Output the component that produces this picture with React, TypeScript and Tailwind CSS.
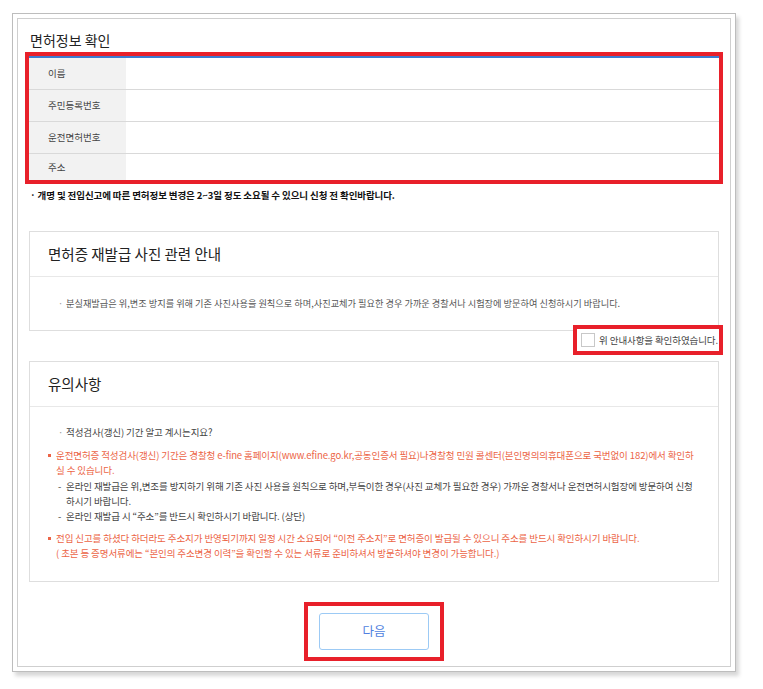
import React from 'react';

const FONT = "font-['Noto_Sans_CJK_KR','Liberation_Sans',sans-serif]";

const ROWS = ['이름', '주민등록번호', '운전면허번호', '주소'];

function RedBullet() {
  return (
    <span className="flex h-[15px] w-[8px] shrink-0 items-center">
      <span className="h-[3px] w-[3px] bg-[#ec6446]" />
    </span>
  );
}

export default function App() {
  return (
    <div className={`min-h-screen bg-white pt-[13px] pl-[12px] ${FONT}`}>
      {/* outer frame */}
      <div className="w-[724px] border border-[#bdbdbd] p-1 shadow-[3px_4px_4px_rgba(0,0,0,0.16)]">
        <div className="border border-[#cfcfcf] pl-[7px] pr-[7px] pt-[12px] pb-[5px]">
          <h1 className="pl-[5px] text-[14px] leading-[18px] text-[#222]">면허정보 확인</h1>

          {/* info table */}
          <div className="mt-[3px] border-4 border-[#e8202a]">
            <div className="border-t-2 border-[#3d7bd0]">
              {ROWS.map((label, i) => (
                <div
                  key={label}
                  className={`flex ${i < ROWS.length - 1 ? 'h-[32px] border-b border-[#d9d9d9]' : 'h-[26px]'}`}
                >
                  <div className="flex w-[97px] items-center bg-[#f2f2f2] pl-[19px] text-[9.5px] text-[#444]">
                    {label}
                  </div>
                  <div className="flex-1" />
                </div>
              ))}
            </div>
          </div>

          <p className="mt-[4px] pl-[5px] text-[9.5px] leading-[14px] font-bold text-[#111] tracking-[-0.1px]">
            · 개명 및 전입신고에 따른 면허정보 변경은 2~3일 정도 소요될 수 있으니 신청 전 확인바랍니다.
          </p>

          {/* photo notice */}
          <section className="mx-[4px] mt-[29px] border border-[#dedede]">
            <div className="flex h-[45px] items-center border-b border-[#e8e8e8] pl-[18px] text-[14.5px] text-[#222]">
              면허증 재발급 사진 관련 안내
            </div>
            <div className="flex h-[53px] items-center pl-[28px] text-[9.2px] text-[#555]">
              <span className="w-[8px] text-[#999]">·</span>
              <span>
                분실재발급은 위,변조 방지를 위해 기존 사진사용을 원칙으로 하며,사진교체가 필요한 경우 가까운 경찰서나 시험장에 방문하여 신청하시기 바랍니다.
              </span>
            </div>
          </section>

          {/* confirm checkbox */}
          <div className="relative -mt-[6px] flex justify-end">
            <label className="flex h-[30px] items-center gap-[4px] border-4 border-[#e8202a] bg-white pl-[4px] pr-[1px]">
              <span className="h-[14px] w-[14px] border border-[#c8c8c8] bg-white" />
              <span className="text-[9.5px] text-[#444] tracking-[-0.1px]">위 안내사항을 확인하였습니다.</span>
            </label>
          </div>

          {/* cautions */}
          <section className="mx-[4px] mt-[6px] border border-[#dedede]">
            <div className="flex h-[45px] items-center border-b border-[#e8e8e8] pl-[18px] text-[14.5px] text-[#222]">
              유의사항
            </div>
            <div className="pl-[18px] pr-[18px] pt-[18px] pb-[20px] text-[9.5px] leading-[15px] tracking-[-0.1px]">
              <div className="flex pl-[10px] text-[#444]">
                <span className="w-[8px] shrink-0 text-[#999]">·</span>
                <span>적성검사(갱신) 기간 알고 계시는지요?</span>
              </div>

              <div className="mt-[8px] flex text-[#ec6446]">
                <RedBullet />
                <span>
                  운전면허증 적성검사(갱신) 기간은 경찰청 e-fine 홈페이지(www.efine.go.kr,공동인증서 필요)나경찰청 민원 콜센터(본인명의의휴대폰으로 국번없이 182)에서 확인하실 수 있습니다.
                </span>
              </div>
              <div className="mt-[1px] flex pl-[10px] text-[#444]">
                <span className="w-[8px] shrink-0">-</span>
                <span>
                  온라인 재발급은 위,변조를 방지하기 위해 기존 사진 사용을 원칙으로 하며,부득이한 경우(사진 교체가 필요한 경우) 가까운 경찰서나 운전면허시험장에 방문하여 신청하시기 바랍니다.
                </span>
              </div>
              <div className="flex pl-[10px] text-[#444]">
                <span className="w-[8px] shrink-0">-</span>
                <span>온라인 재발급 시 “주소”를 반드시 확인하시기 바랍니다. (상단)</span>
              </div>

              <div className="mt-[7px] flex text-[#ec6446]">
                <RedBullet />
                <span>
                  전입 신고를 하셨다 하더라도 주소지가 반영되기까지 일정 시간 소요되어 “이전 주소지”로 면허증이 발급될 수 있으니 주소를 반드시 확인하시기 바랍니다.
                  <br />( 초본 등 증명서류에는 “본인의 주소변경 이력”을 확인할 수 있는 서류로 준비하셔서 방문하셔야 변경이 가능합니다.)
                </span>
              </div>
            </div>
          </section>

          {/* next button */}
          <div className="mt-[20px] flex justify-center">
            <div className="border-4 border-[#e8202a] px-[11px] py-[7px]">
              <button className="h-[37px] w-[110px] rounded-[3px] border border-[#9ccaf5] bg-white text-[12.5px] text-[#4f7fe0]">
                다음
              </button>
            </div>
          </div>
        </div>
      </div>
    </div>
  );
}
